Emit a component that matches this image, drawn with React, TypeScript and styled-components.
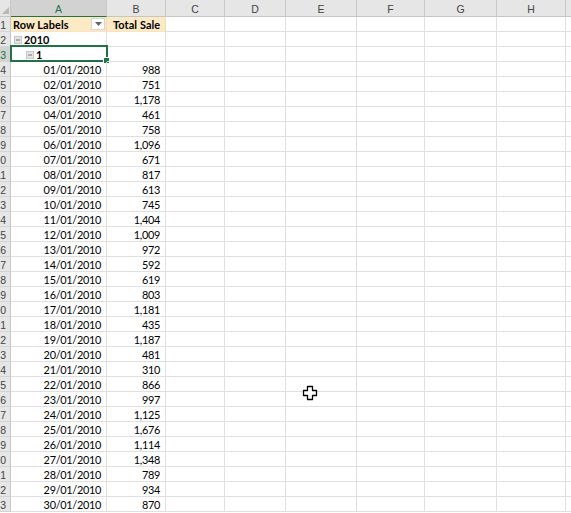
import React from 'react';
import styled, {createGlobalStyle} from 'styled-components';

const GlobalStyle = createGlobalStyle`
  html, body {
    margin: 0;
    padding: 0;
    background: #ffffff;
  }
  body {
    font-family: Lato, "Open Sans", "Liberation Sans", sans-serif;
    overflow: hidden;
  }
`

const COLS = '11px 96px 59px 59px 61px 71px 68px 72px 69px 40px';
const LETTERS = ['A', 'B', 'C', 'D', 'E', 'F', 'G', 'H', ''];

const sales: [string, string][] = [
    ['01/01/2010', '988'], ['02/01/2010', '751'], ['03/01/2010', '1,178'],
    ['04/01/2010', '461'], ['05/01/2010', '758'], ['06/01/2010', '1,096'],
    ['07/01/2010', '671'], ['08/01/2010', '817'], ['09/01/2010', '613'],
    ['10/01/2010', '745'], ['11/01/2010', '1,404'], ['12/01/2010', '1,009'],
    ['13/01/2010', '972'], ['14/01/2010', '592'], ['15/01/2010', '619'],
    ['16/01/2010', '803'], ['17/01/2010', '1,181'], ['18/01/2010', '435'],
    ['19/01/2010', '1,187'], ['20/01/2010', '481'], ['21/01/2010', '310'],
    ['22/01/2010', '866'], ['23/01/2010', '997'], ['24/01/2010', '1,125'],
    ['25/01/2010', '1,676'], ['26/01/2010', '1,114'], ['27/01/2010', '1,348'],
    ['28/01/2010', '789'], ['29/01/2010', '934'], ['30/01/2010', '870'],
];

const Collapse = () => (
    <svg width="8" height="8" viewBox="0 0 8 8">
        <rect x="0.5" y="0.5" width="7" height="7" fill="#e4e4e4" stroke="#c8c8c8"/>
        <rect x="2" y="3.5" width="4" height="1" fill="#777"/>
    </svg>
);

const DropArrow = () => (
    <svg width="7" height="4" viewBox="0 0 7 4">
        <path d="M0 0 L7 0 L3.5 4 Z" fill="#666"/>
    </svg>
);

const Cursor = () => (
    <svg width="16" height="16" viewBox="0 0 16 16">
        <path d="M5.5 1.5 H10.5 V5.5 H14.5 V10.5 H10.5 V14.5 H5.5 V10.5 H1.5 V5.5 H5.5 Z"
              fill="#fff" stroke="#000" strokeWidth="1.3" strokeLinejoin="round"/>
    </svg>
);

const App = () => {
    return (
        <>
            <GlobalStyle/>
            <Sheet>
                <HeaderRow>
                    <Corner>
                        <svg width="8" height="8" viewBox="0 0 8 8">
                            <path d="M8 1 L8 8 L1 8 Z" fill="#b8b8b8"/>
                        </svg>
                    </Corner>
                    {LETTERS.map((l, i) => (
                        <ColHead key={i} active={l === 'A'}>{l}</ColHead>
                    ))}
                </HeaderRow>

                <Row>
                    <RowNum>1</RowNum>
                    <PivotHead pad={2}>
                        <span>Row Labels</span>
                        <FilterBtn><DropArrow/></FilterBtn>
                    </PivotHead>
                    <PivotHead pad={6}>Total Sale</PivotHead>
                    {LETTERS.slice(2).map((_, i) => <Cell key={i}/>)}
                </Row>

                <Row>
                    <RowNum>2</RowNum>
                    <Cell bold indent={3}><Collapse/>2010</Cell>
                    {LETTERS.slice(1).map((_, i) => <Cell key={i}/>)}
                </Row>

                <Row>
                    <RowNum active>3</RowNum>
                    <Cell bold indent={15}>
                        <Collapse/>1
                        <Selection>
                            <FillHandle/>
                        </Selection>
                    </Cell>
                    {LETTERS.slice(1).map((_, i) => <Cell key={i}/>)}
                </Row>

                {sales.map(([date, value], idx) => (
                    <Row key={date}>
                        <RowNum>{idx + 4}</RowNum>
                        <Cell right>{date}</Cell>
                        <Cell right>{value}</Cell>
                        {LETTERS.slice(2).map((_, i) => <Cell key={i}/>)}
                    </Row>
                ))}

                <CursorSpot>
                    <Cursor/>
                </CursorSpot>
            </Sheet>
        </>
    );
};

const Sheet = styled.div`
  position: relative;
  width: 571px;
  height: 513px;
  overflow: hidden;
  font-size: 10.9px;
  letter-spacing: -0.3px;
  color: #000;
  background: #fff;
`

const HeaderRow = styled.div`
  display: grid;
  grid-template-columns: ${COLS};
  height: 17px;
`

const Corner = styled.div`
  box-sizing: border-box;
  background: #e6e6e6;
  border-right: 1px solid #c6c6c6;
  border-bottom: 1px solid #c6c6c6;
  display: flex;
  align-items: flex-end;
  justify-content: flex-end;
  padding: 0 1px 2px 0;
`

const ColHead = styled.div<{ active?: boolean }>`
  box-sizing: border-box;
  display: flex;
  align-items: center;
  justify-content: center;
  padding-top: 1px;
  font-family: "Liberation Sans", Arial, sans-serif;
  font-size: 10.5px;
  letter-spacing: 0;
  color: ${p => p.active ? '#217346' : '#444'};
  background: ${p => p.active ? '#d2d2d2' : '#e6e6e6'};
  border-right: 1px solid #c9c9c9;
  border-bottom: 1px solid ${p => p.active ? '#217346' : '#c6c6c6'};
`

const Row = styled.div`
  display: grid;
  grid-template-columns: ${COLS};
  height: 15px;
`

const RowNum = styled.div<{ active?: boolean }>`
  box-sizing: border-box;
  display: flex;
  align-items: center;
  justify-content: flex-end;
  overflow: hidden;
  padding: 1px 4px 0 0;
  font-family: "Liberation Sans", Arial, sans-serif;
  font-size: 10.5px;
  letter-spacing: 0;
  color: ${p => p.active ? '#217346' : '#444'};
  background: ${p => p.active ? '#d2d2d2' : '#e6e6e6'};
  border-right: 1px solid ${p => p.active ? '#217346' : '#c6c6c6'};
  border-bottom: 1px solid #d4d4d4;
`

const Cell = styled.div<{ right?: boolean; bold?: boolean; indent?: number }>`
  position: relative;
  box-sizing: border-box;
  display: flex;
  align-items: center;
  gap: 2px;
  justify-content: ${p => p.right ? 'flex-end' : 'flex-start'};
  padding: 1px ${p => p.right ? 5 : 2}px 0 ${p => p.indent ?? 2}px;
  font-weight: ${p => p.bold ? 700 : 400};
  letter-spacing: ${p => p.bold ? '0' : '-0.3px'};
  white-space: nowrap;
  border-right: 1px solid #e0e0e0;
  border-bottom: 1px solid #e0e0e0;
`

const PivotHead = styled.div<{ pad: number }>`
  box-sizing: border-box;
  display: flex;
  align-items: center;
  justify-content: space-between;
  padding: 1px 1px 0 ${p => p.pad}px;
  font-weight: 700;
  letter-spacing: 0.1px;
  white-space: nowrap;
  background: #fde9c4;
  border-right: 1px solid #f3dcb4;
  border-bottom: 1px solid #f6e4c3;
`

const FilterBtn = styled.div`
  box-sizing: border-box;
  width: 14px;
  height: 12px;
  margin-top: -1px;
  display: flex;
  align-items: center;
  justify-content: center;
  background: #fff;
  border: 1px solid #d6d6d6;
`

const Selection = styled.div`
  position: absolute;
  left: -1px;
  top: -2px;
  right: -2px;
  bottom: -1px;
  border: 2px solid #217346;
  pointer-events: none;
`

const FillHandle = styled.div`
  position: absolute;
  right: -4px;
  bottom: -4px;
  width: 5px;
  height: 5px;
  background: #217346;
  border: 1px solid #fff;
`

const CursorSpot = styled.div`
  position: absolute;
  left: 302px;
  top: 385px;
  width: 16px;
  height: 16px;
`

export default App;
